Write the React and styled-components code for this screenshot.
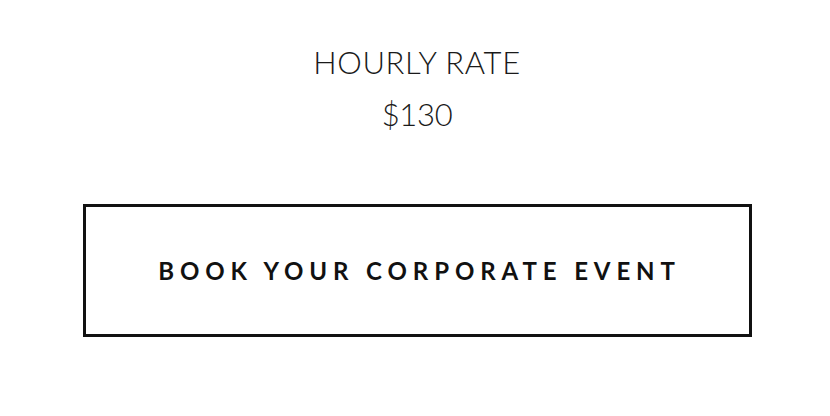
import React from "react";
import styled, { createGlobalStyle } from "styled-components";

const Global = createGlobalStyle`
  html, body { margin: 0; padding: 0; background: #fff; }
  body { font-family: "Lato", "Liberation Sans", sans-serif; color: #111; }
`;

const Page = styled.main`
  width: 830px;
  height: 416px;
  display: flex;
  flex-direction: column;
  align-items: center;
  padding-top: 41px;
  box-sizing: border-box;
`;

const Rate = styled.section`
  display: flex;
  flex-direction: column;
  align-items: center;
  gap: 10px;
  margin-left: 4px;
`;

const Label = styled.p`
  margin: 0;
  font-size: 31px;
  font-weight: 300;
  line-height: 42px;
  color: #1a1a1a;
  letter-spacing: ${(p) => (p.$tight ? "-0.01em" : "0.02em")};
`;

const BookButton = styled.button`
  margin-top: 69px;
  width: 669px;
  height: 133px;
  margin-left: 4px;
  border: 3.5px solid #111;
  background: #fff;
  font-family: "Lato", "Liberation Sans", sans-serif;
  font-size: 24px;
  font-weight: 700;
  letter-spacing: 5.9px;
  color: #111;
  padding: 0 0 0 5px;
  cursor: pointer;
  box-sizing: border-box;
`;

export default function App() {
  return (
    <>
      <Global />
      <Page>
        <Rate>
          <Label>HOURLY RATE</Label>
          <Label $tight>$130</Label>
        </Rate>
        <BookButton>BOOK YOUR CORPORATE EVENT</BookButton>
      </Page>
    </>
  );
}
